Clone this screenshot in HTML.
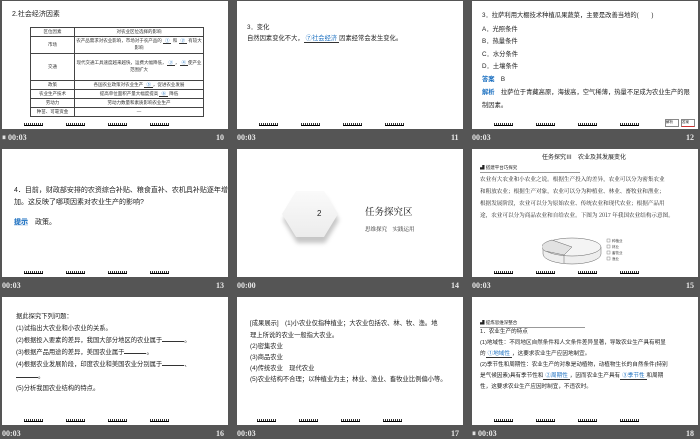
<!DOCTYPE html>
<html><head><meta charset="utf-8"><style>
*{margin:0;padding:0;box-sizing:border-box}
body{width:700px;height:438px;background:#555;position:relative;overflow:hidden;font-family:"Liberation Sans","Noto Sans CJK SC",sans-serif;color:#222}
.s{position:absolute;background:#fff;width:226px;height:128px;overflow:hidden}
.bar{position:absolute;color:#e8e8e8;font:bold 8px "Liberation Serif",serif}
.t{position:absolute;font-size:6.3px;white-space:nowrap;line-height:1}
.lk{position:absolute;bottom:3px;height:3px;width:19px;border-bottom:1px solid #000;background:repeating-linear-gradient(90deg,#333 0 1px,#fff 1px 2px)}
.bl{color:#1a6fc0;border-bottom:0.6px solid #333;padding:0 2px}
.u{display:inline-block;width:22px;border-bottom:0.6px solid #333}
table{position:absolute;left:28px;top:26px;width:174px;border-collapse:collapse;font-size:4.5px;color:#333}
td{border:0.7px solid #444;text-align:center;height:9px;padding:0 1px;line-height:1.5}
</style></head><body>
<!-- Row 1 -->
<div class="s" style="left:2px;top:1px">
<div class="t" style="left:10px;top:10px;font-size:7px">2.社会经济因素</div>
<table>
<tr><td style="width:44px">区位因素</td><td>对农业区位选择的影响</td></tr>
<tr><td style="height:17px">市场</td><td>农产品需求对农业影响，市场对于农产品的 <span class="bl">①</span> 和 <span class="bl">②</span> 有较大影响</td></tr>
<tr><td style="height:27px">交通</td><td>现代交通工具速度越来越快，运费大幅降低，<span class="bl">③</span>，<span class="bl">④</span>使产业范围扩大</td></tr>
<tr><td>政策</td><td>各国农业政策对农业生产 <span class="bl">⑤</span>，促进农业发展</td></tr>
<tr><td>农业生产技术</td><td>提高单位面积产量大幅度提高 <span class="bl">⑥</span> 降低</td></tr>
<tr><td>劳动力</td><td>劳动力数量和素质影响农业生产</td></tr>
<tr><td>种苗、可靠资金</td><td>—</td></tr>
</table>
<div class="lk" style="left:22px"></div><div class="lk" style="left:64px"></div><div class="lk" style="left:106px"></div><div class="lk" style="left:148px"></div>
</div>
<div class="bar" style="left:2px;top:133px">⏸ 00:03</div><div class="bar" style="left:216px;top:133px">10</div>

<div class="s" style="left:237px;top:1px">
<div class="t" style="left:10px;top:24px">3．变化</div>
<div class="t" style="left:10px;top:35px">自然因素变化不大，<span class="bl">⑦社会经济</span>因素经常会发生变化。</div>
<div class="lk" style="left:22px"></div><div class="lk" style="left:64px"></div><div class="lk" style="left:106px"></div><div class="lk" style="left:148px"></div>
</div>
<div class="bar" style="left:237px;top:133px">00:03</div><div class="bar" style="left:451px;top:133px">11</div>

<div class="s" style="left:472px;top:1px">
<div class="t" style="left:10px;top:12px">3．拉萨利用大棚技术种植瓜果蔬菜，主要是改善当地的(　　)</div>
<div class="t" style="left:10px;top:26px">A．光照条件</div>
<div class="t" style="left:10px;top:38px">B．热量条件</div>
<div class="t" style="left:10px;top:51px">C．水分条件</div>
<div class="t" style="left:10px;top:63px">D．土壤条件</div>
<div class="t" style="left:10px;top:76px"><b style="color:#1a6fc0">答案</b>　B</div>
<div class="t" style="left:10px;top:89px"><b style="color:#1a6fc0">解析</b>　拉萨位于青藏高原，海拔高，空气稀薄，热量不足成为农业生产的限</div>
<div class="t" style="left:10px;top:102px">制因素。</div>
<div style="position:absolute;left:193px;top:118px;width:14px;height:8px;border:0.7px solid #888;font-size:3.5px">解析</div>
<div style="position:absolute;left:209px;top:118px;width:14px;height:8px;border:0.7px solid #888;font-size:3.5px;border-bottom-color:#c33">答案</div>
<div class="lk" style="left:22px"></div><div class="lk" style="left:64px"></div><div class="lk" style="left:106px"></div><div class="lk" style="left:148px"></div>
</div>
<div class="bar" style="left:472px;top:133px">00:03</div><div class="bar" style="left:686px;top:133px">12</div>

<!-- Row 2 -->
<div class="s" style="left:2px;top:149px">
<div class="t" style="left:12px;top:38px;font-size:7px">4．目前，财政部安排的农资综合补贴、粮食直补、农机具补贴逐年增</div>
<div class="t" style="left:12px;top:50px;font-size:7px">加。这反映了哪项因素对农业生产的影响?</div>
<div class="t" style="left:12px;top:70px;font-size:7px"><b style="color:#1a6fc0;background:#dde8f5">提示</b>　政策。</div>
<div class="lk" style="left:22px"></div><div class="lk" style="left:64px"></div><div class="lk" style="left:106px"></div><div class="lk" style="left:148px"></div>
</div>
<div class="bar" style="left:2px;top:281px">00:03</div><div class="bar" style="left:216px;top:281px">13</div>

<div class="s" style="left:237px;top:149px">
<svg style="position:absolute;left:43px;top:38px" width="64" height="62"><defs><linearGradient id="g" x1="0" y1="0" x2="0" y2="1"><stop offset="0" stop-color="#fafafa"/><stop offset="1" stop-color="#ececec"/></linearGradient><filter id="f"><feGaussianBlur stdDeviation="2"/></filter></defs>
<polygon points="16,7 44,7 58,30 44,53 16,53 2,30" fill="#999" filter="url(#f)" opacity=".55" transform="translate(1,3)"/>
<polygon points="16,4 44,4 58,27 44,50 16,50 2,27" fill="url(#g)"/></svg>
<div class="t" style="left:80px;top:61px;font-size:8px">2</div>
<div class="t" style="left:128px;top:58px;font-size:9.5px;color:#111;font-family:'Noto Serif CJK SC',serif">任务探究区</div>
<div class="t" style="left:128px;top:78px;font-size:5.5px;color:#222;font-family:'Noto Serif CJK SC',serif">思维探究　实践运用</div>
</div>
<div class="bar" style="left:237px;top:281px">00:00</div><div class="bar" style="left:451px;top:281px">14</div>

<div class="s" style="left:472px;top:149px">
<div class="t" style="left:70px;top:6px;font-size:6px">任务探究Ⅲ　农业及其发展变化</div>
<div class="t" style="left:8px;top:17px;font-size:4.5px;border-bottom:0.6px solid #999;width:100px;padding-bottom:1px">▟ 搭建平台巧探究</div>
<div class="t" style="left:8px;top:28px;font-size:5.6px;font-family:'Noto Serif CJK SC',serif">农业有大农业和小农业之说。根据生产投入的差异，农业可以分为密集农业</div>
<div class="t" style="left:8px;top:40px;font-size:5.6px;font-family:'Noto Serif CJK SC',serif">和粗放农业；根据生产对象，农业可以分为种植业、林业、畜牧业和渔业；</div>
<div class="t" style="left:8px;top:52px;font-size:5.6px;font-family:'Noto Serif CJK SC',serif">根据发展阶段，农业可以分为原始农业、传统农业和现代农业；根据产品用</div>
<div class="t" style="left:8px;top:64px;font-size:5.6px;font-family:'Noto Serif CJK SC',serif">途，农业可以分为商品农业和自给农业。下图为 2017 年我国农业结构示意图。</div>
<svg style="position:absolute;left:70px;top:88px" width="110" height="32">
<path d="M1 10 L1 17 A29 10 0 0 0 59 17 L59 10" fill="#eee" stroke="#666" stroke-width=".5"/>
<ellipse cx="30" cy="10" rx="29" ry="9" fill="#f4f4f4" stroke="#666" stroke-width=".5"/>
<path d="M30 10 L10 3 A29 9 0 0 0 3 14 L22 18 Z" fill="#e2e2e2" stroke="#666" stroke-width=".5"/>
<path d="M22 18 L22 26" stroke="#666" stroke-width=".5"/>
<g font-size="3.5" fill="#444"><rect x="65" y="2" width="3" height="3" fill="none" stroke="#666" stroke-width=".4"/><text x="70" y="5">种植业</text>
<rect x="65" y="8" width="3" height="3" fill="none" stroke="#666" stroke-width=".4"/><text x="70" y="11">林业</text>
<rect x="65" y="14" width="3" height="3" fill="none" stroke="#666" stroke-width=".4"/><text x="70" y="17">畜牧业</text>
<rect x="65" y="20" width="3" height="3" fill="none" stroke="#666" stroke-width=".4"/><text x="70" y="23">渔业</text></g></svg>
<div class="lk" style="left:22px"></div><div class="lk" style="left:64px"></div><div class="lk" style="left:106px"></div><div class="lk" style="left:148px"></div>
</div>
<div class="bar" style="left:472px;top:281px">00:03</div><div class="bar" style="left:686px;top:281px">15</div>

<!-- Row 3 -->
<div class="s" style="left:2px;top:297px">
<div class="t" style="left:14px;top:17px">据此探究下列问题：</div>
<div class="t" style="left:14px;top:29px">(1)试指出大农业和小农业的关系。</div>
<div class="t" style="left:14px;top:41px">(2)根据投入要素的差异，我国大部分地区的农业属于<span class="u"></span>。</div>
<div class="t" style="left:14px;top:53px">(3)根据产品用途的差异，美国农业属于<span class="u"></span>。</div>
<div class="t" style="left:14px;top:65px">(4)根据农业发展阶段，印度农业和美国农业分别属于<span class="u"></span>、</div>
<div class="t" style="left:14px;top:77px"><span class="u"></span>。</div>
<div class="t" style="left:14px;top:89px">(5)分析我国农业结构的特点。</div>
<div class="lk" style="left:22px"></div><div class="lk" style="left:64px"></div><div class="lk" style="left:106px"></div><div class="lk" style="left:148px"></div>
</div>
<div class="bar" style="left:2px;top:429px">00:03</div><div class="bar" style="left:216px;top:429px">16</div>

<div class="s" style="left:237px;top:297px">
<div class="t" style="left:13px;top:24px">[成果展示]　(1)小农业仅指种植业；大农业包括农、林、牧、渔。地</div>
<div class="t" style="left:13px;top:36px">理上所说的农业一般指大农业。</div>
<div class="t" style="left:13px;top:47px">(2)密集农业</div>
<div class="t" style="left:13px;top:58px">(3)商品农业</div>
<div class="t" style="left:13px;top:69px">(4)传统农业　现代农业</div>
<div class="t" style="left:13px;top:80px">(5)农业结构不合理；以种植业为主；林业、渔业、畜牧业比例偏小等。</div>
<div class="lk" style="left:20px"></div><div class="lk" style="left:62px"></div><div class="lk" style="left:104px"></div><div class="lk" style="left:146px"></div>
</div>
<div class="bar" style="left:237px;top:429px">00:03</div><div class="bar" style="left:451px;top:429px">17</div>

<div class="s" style="left:472px;top:297px">
<div class="t" style="left:8px;top:24px;font-size:4.5px;border-bottom:0.6px solid #999;width:105px;padding-bottom:1px">▟ 提炼思维深整合</div>
<div class="t" style="left:8px;top:33px;font-size:5.6px">1．农业生产的特点</div>
<div class="t" style="left:8px;top:44px;font-size:5.6px">(1)地域性：不同地区自然条件和人文条件差异显著，导致农业生产具有明显</div>
<div class="t" style="left:8px;top:55px;font-size:5.6px">的<span class="bl">①地域性</span>，这要求农业生产应因地制宜。</div>
<div class="t" style="left:8px;top:66px;font-size:5.6px">(2)季节性和周期性：农业生产的对象是动植物，动植物生长的自然条件(特别</div>
<div class="t" style="left:8px;top:77px;font-size:5.6px">是气候因素)具有季节性和<span class="bl">②周期性</span>，因而农业生产具有<span class="bl">③季节性</span>和周期</div>
<div class="t" style="left:8px;top:88px;font-size:5.6px">性，这要求农业生产应因时制宜，不违农时。</div>
<div class="lk" style="left:22px"></div><div class="lk" style="left:64px"></div><div class="lk" style="left:106px"></div><div class="lk" style="left:148px"></div>
</div>
<div class="bar" style="left:472px;top:429px">⏸ 00:03</div><div class="bar" style="left:686px;top:429px">18</div>
</body></html>
